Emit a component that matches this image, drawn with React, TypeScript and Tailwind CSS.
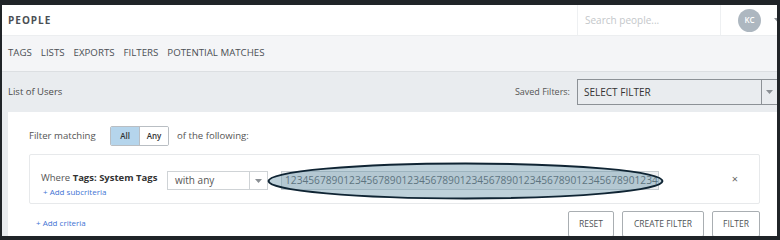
const font = { fontFamily: '"Open Sans", "Liberation Sans", sans-serif' };

const navItems = ['TAGS', 'LISTS', 'EXPORTS', 'FILTERS', 'POTENTIAL MATCHES'];

function Caret({ className = '' }: { className?: string }) {
  return (
    <svg width="7" height="4" viewBox="0 0 7 4" className={className}>
      <path d="M0 0h7L3.5 4z" fill="#8a8f94" />
    </svg>
  );
}

export default function App() {
  const digits = '1234567890'.repeat(6) + '1234';

  return (
    <div className="w-[780px] h-[240px] bg-[#202428] pl-[2px] pt-[5px]" style={font}>
      <div className="w-[775px] h-[231px] overflow-hidden">
        <div className="w-[782px] h-full flex flex-col bg-[#e9ecef] text-[#4a4a4a]">
          {/* header */}
          <div className="h-[31px] shrink-0 bg-white border-b border-[#eceef0] flex items-stretch">
            <div className="flex-1 flex items-center pl-[6px] text-[10px] font-bold tracking-[1px] text-[#4b4f54]">
              PEOPLE
            </div>
            <div className="w-[144px] border-l border-r border-[#eef0f2] flex items-center pl-[7px] text-[10px] text-[#c4c7ca]">
              Search people...
            </div>
            <div className="w-[63px] flex items-center pl-[17px]">
              <div className="w-[23px] h-[23px] rounded-full bg-[#adb7c0] flex items-center justify-center text-[8px] font-semibold text-white">
                KC
              </div>
              <Caret className="ml-[13px]" />
            </div>
          </div>

          {/* nav */}
          <div className="h-[36px] shrink-0 bg-[#f4f5f7] border-b border-[#dcdfe2] flex items-center gap-[9px] pl-[6px] text-[9.7px] text-[#4b4f54]">
            {navItems.map((n) => (
              <span key={n}>{n}</span>
            ))}
          </div>

          {/* main */}
          <div className="flex-1 px-[6px] pt-[7px]">
            <div className="flex items-center h-[26px]">
              <span className="flex-1 text-[9.5px] text-[#4a4a4a]">List of Users</span>
              <span className="text-[9px] text-[#555] mr-[7px]">Saved Filters:</span>
              <div className="w-[201px] h-[26px] border border-[#8c9196] bg-[#e9ecef] flex items-stretch">
                <div className="flex-1 flex items-center pl-[6px] text-[10px] text-[#333]">SELECT FILTER</div>
                <div className="w-[16px] border-l border-[#8c9196] flex items-center justify-center">
                  <Caret />
                </div>
              </div>
            </div>

            <div className="mt-[7px] bg-white pl-[21px] pr-[18px] pt-[14px] pb-[10px]">
              <div className="flex items-center h-[20px] text-[9.6px] text-[#555]">
                <span className="w-[81px]">Filter matching</span>
                <div className="flex h-[20px] border border-[#b9bec3] rounded-[2px] overflow-hidden text-[8px] font-semibold text-[#333]">
                  <span className="w-[29px] bg-[#b5d5ec] flex items-center justify-center border-r border-[#b9bec3]">All</span>
                  <span className="w-[28px] bg-white flex items-center justify-center">Any</span>
                </div>
                <span className="ml-[8px]">of the following:</span>
              </div>

              <div className="relative mt-[8px] h-[50px] border border-[#e7e9eb] rounded-[2px] flex pt-[15px] pl-[11px]">
                <div className="w-[126px]">
                  <div className="text-[9.5px] leading-[16px] text-[#555]">
                    Where <span className="font-bold text-[#333]">Tags: System Tags</span>
                  </div>
                  <div className="text-[8px] leading-[12px] text-[#3f74d4] pl-[2px]">+ Add subcriteria</div>
                </div>
                <div className="mt-[1px] w-[101px] h-[19px] border border-[#cfd3d6] bg-white flex items-stretch">
                  <div className="flex-1 flex items-center pl-[7px] text-[10px] text-[#555]">with any</div>
                  <div className="w-[18px] border-l border-[#cfd3d6] flex items-center justify-center">
                    <Caret />
                  </div>
                </div>
                <div className="ml-[13px] mt-[1px] w-[378px] h-[19px] border border-[#c7cdd1] bg-[#eef0f2] overflow-hidden whitespace-nowrap pl-[3px] text-[10.2px] leading-[17px] text-[#5a5f64]">
                  {digits}
                </div>
                <svg
                  className="absolute left-[237px] top-[7px]"
                  width="397"
                  height="38"
                  viewBox="0 0 397 38"
                >
                  <ellipse cx="198.5" cy="19" rx="197" ry="17.5" fill="rgba(100,145,168,0.42)" stroke="#0f2433" strokeWidth="2" />
                </svg>
                <span className="absolute right-[21px] top-[16px] text-[11px] text-[#666]">×</span>
              </div>

              <div className="flex items-start mt-[7px]">
                <span className="flex-1 pl-[7px] pt-[6px] text-[8px] text-[#3f74d4]">+ Add criteria</span>
                <div className="flex gap-[8px] text-[8.5px] text-[#4f5357]">
                  <button className="w-[46px] h-[26px] border border-[#a9aeb2] rounded-[2px] bg-white">RESET</button>
                  <button className="w-[82px] h-[26px] border border-[#a9aeb2] rounded-[2px] bg-white">CREATE FILTER</button>
                  <button className="w-[48px] h-[26px] border border-[#a9aeb2] rounded-[2px] bg-white">FILTER</button>
                </div>
              </div>
            </div>
          </div>
        </div>
      </div>
    </div>
  );
}
